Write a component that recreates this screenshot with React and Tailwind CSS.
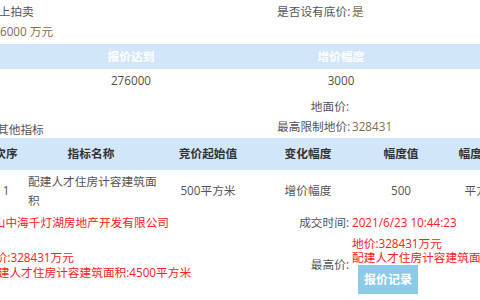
import React from 'react';

const font = { fontFamily: '"Open Sans", "Noto Sans CJK SC", sans-serif' };

const cols = [
  { key: 'order', title: '次序', w: 'w-[32px]' },
  { key: 'name', title: '指标名称', w: 'w-[138px]' },
  { key: 'start', title: '竞价起始值', w: 'w-[96px]' },
  { key: 'change', title: '变化幅度', w: 'w-[104px]' },
  { key: 'step', title: '幅度值', w: 'w-[82px]' },
  { key: 'unit', title: '幅度单位', w: 'w-[80px]' },
];

const InfoRow = ({ label, value }) => (
  <div className="flex items-center whitespace-nowrap">
    <span className="w-[72px] shrink-0 text-right">{label}</span>
    <span className="ml-[3px] text-[#80704f]">{value}</span>
  </div>
);

export default function App() {
  return (
    <div className="w-[480px] h-[300px] overflow-hidden bg-white text-[11.7px] text-[#555]" style={font}>
      {/* 基本信息 */}
      <div className="flex h-[23px] items-center">
        <div className="w-[277px] shrink-0 overflow-hidden">
          <span className="block ml-[-13px] whitespace-nowrap">网上拍卖</span>
        </div>
        <InfoRow label="是否设有底价:" value="是" />
      </div>
      <div className="flex h-[17px] items-center text-[#80704f]">6000 万元</div>

      {/* 报价 */}
      <div className="mt-[4px] h-[25px] bg-[#d2e6f9] flex items-center">
        <div className="ml-[26px] grid grid-cols-[210px_210px] font-bold text-white">
          <span className="text-center">报价达到</span>
          <span className="text-center">增价幅度</span>
        </div>
      </div>
      <div className="h-[24px] flex items-center">
        <div className="ml-[26px] grid grid-cols-[210px_210px] text-[#5a5040]">
          <span className="text-center">276000</span>
          <span className="text-center">3000</span>
        </div>
      </div>

      <div className="mt-[4px] flex h-[20px] items-center">
        <div className="w-[277px] shrink-0" />
        <InfoRow label="地面价:" value="" />
      </div>
      <div className="flex h-[20px] items-center">
        <div className="w-[277px] shrink-0 overflow-hidden mt-[6px]">
          <span className="block ml-[-3px] whitespace-nowrap">其他指标</span>
        </div>
        <InfoRow label="最高限制地价:" value="328431" />
      </div>

      {/* 其他指标表格 */}
      <div className="mt-[1px] h-[32px] bg-[#d2e6f9] flex items-center">
        <div className="ml-[-10px] flex font-bold text-[#333]">
          {cols.map((c) => (
            <span key={c.key} className={`${c.w} shrink-0 text-center whitespace-nowrap`}>{c.title}</span>
          ))}
        </div>
      </div>
      <div className="h-[42px] flex items-center">
        <div className="ml-[-10px] flex items-center">
          <span className="w-[32px] shrink-0 text-center">1</span>
          <div className="w-[138px] shrink-0 pl-[6px]">
            <div className="w-[136px] leading-[19px]">配建人才住房计容建筑面积</div>
          </div>
          <span className="w-[96px] shrink-0 text-center">500平方米</span>
          <span className="w-[104px] shrink-0 text-center">增价幅度</span>
          <span className="w-[82px] shrink-0 text-center">500</span>
          <span className="w-[80px] shrink-0 text-center whitespace-nowrap">平方米</span>
        </div>
      </div>

      {/* 成交结果 */}
      <div className="flex">
        <div className="w-[277px] shrink-0 overflow-hidden text-[#ff2020]">
          <div className="h-[22px] flex items-center">
            <span className="ml-[-18px] whitespace-nowrap">佛山中海千灯湖房地产开发有限公司</span>
          </div>
          <div className="mt-[16px] leading-[15px] whitespace-nowrap">
            <div className="ml-[-16px]">地价:328431万元</div>
            <div className="ml-[-14px]">配建人才住房计容建筑面积:4500平方米</div>
          </div>
        </div>
        <div className="whitespace-nowrap">
          <div className="h-[22px] flex items-center">
            <span className="w-[72px] shrink-0 text-right">成交时间:</span>
            <span className="ml-[3px] text-[#ff2020]">2021/6/23 10:44:23</span>
          </div>
          <div className="mt-[2px] flex items-center">
            <span className="w-[72px] shrink-0 text-right">最高价:</span>
            <div className="ml-[3px] text-[#ff2020] leading-[14px]">
              <div>地价:328431万元</div>
              <div>配建人才住房计容建筑面积:4500平方米</div>
              <button className="mt-[1px] ml-[6px] h-[29px] w-[60px] bg-[#8ccbe8] text-white font-bold text-[12px]">
                报价记录
              </button>
            </div>
          </div>
        </div>
      </div>
    </div>
  );
}
